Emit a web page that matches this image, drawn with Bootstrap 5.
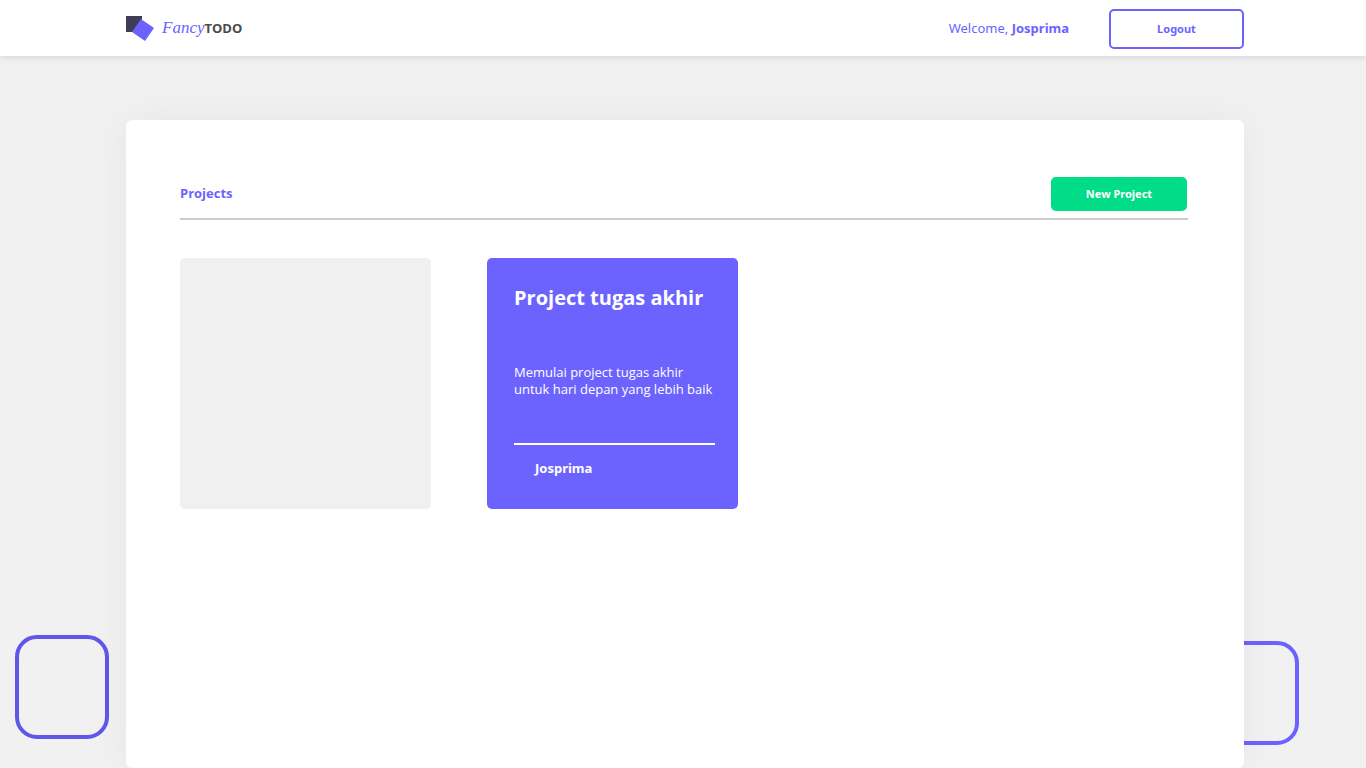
<!DOCTYPE html>
<html lang="en">
<head>
<meta charset="utf-8">
<meta name="viewport" content="width=device-width, initial-scale=1">
<title>Fancy Todo</title>
<link href="https://cdn.jsdelivr.net/npm/bootstrap@5.3.0/dist/css/bootstrap.min.css" rel="stylesheet">
<style>
:root { --brand: #6c63ff; --gray: #f0f0f0; }
body { background: #f1f1f1; font-family: "Noto Sans", "Open Sans", sans-serif; font-size: 13px; line-height: 17px; }
.page-gutter { padding-left: 126px; padding-right: 122px; }
.topbar { height: 56px; box-shadow: 0 2px 6px rgba(0,0,0,.1); z-index: 3; }
.brand-text { color: var(--brand); }
.script-name { font-family: "Liberation Serif", serif; font-style: italic; font-size: 17px; line-height: 24px; color: var(--brand); }
.caps-name { font-family: "Open Sans", sans-serif; font-size: 13px; font-weight: 700; color: #4a4a4a; }
.btn-logout { width: 135px; height: 40px; margin-top: 2px; border: 2px solid var(--brand); border-radius: 5px; color: var(--brand); font-size: 11px; font-weight: 700; padding: 0; }
.btn-logout:hover { background: var(--brand); color: #fff; }
.btn-new { width: 136px; height: 34px; margin-right: 1px; background: #00dc87; border: 0; border-radius: 5px; color: #fff; font-size: 11px; font-weight: 700; padding: 0; }
.btn-new:hover { background: #00c579; color: #fff; }
.board { min-height: calc(100vh - 120px); margin-top: 64px; padding: 57px 56px 40px 54px; border-radius: 6px; box-shadow: 0 0 40px rgba(0,0,0,.05); z-index: 1; }
.board-head { height: 43px; border-bottom: 2px solid #ccc; }
.section-title { font-family: "Open Sans", sans-serif; font-size: 13px; line-height: 32px; font-weight: 700; }
.cards { gap: 56px; margin-top: 38px; }
.tile { width: 251px; height: 251px; border-radius: 5px; }
.tile-empty { background: var(--gray); }
.tile-project { background: var(--brand); padding: 27px 23px 24px 27px; }
.tile-title { font-family: "Open Sans", sans-serif; font-size: 20px; line-height: 26px; font-weight: 700; }
.tile-text { font-family: "Open Sans", sans-serif; margin-top: 53px; }
.tile-owner { border-top: 2px solid #fff; padding: 15px 21px 8px; font-weight: 700; }
.frame { width: 94px; height: 104px; border: 4px solid var(--brand); border-radius: 22px; }
.frame-left { left: 15px; top: 635px; border-color: #5f57e8; }
.frame-right { right: 67px; top: 641px; }
</style>
</head>
<body class="position-relative">
<header class="topbar page-gutter bg-white position-relative d-flex align-items-center justify-content-between">
  <a href="#" class="d-flex align-items-center text-decoration-none">
    <svg width="36" height="28" viewBox="0 0 36 28" aria-hidden="true">
      <path d="M0 2h16v16H0z" fill="#3f3d56"/>
      <path d="M15 5l13 9-9 13-13-9z" fill="#6c63ff"/>
    </svg>
    <span class="script-name">Fancy</span><span class="caps-name">TODO</span>
  </a>
  <div class="d-flex align-items-center">
    <span class="brand-text me-4 pe-3">Welcome, <strong>Josprima</strong></span>
    <button type="button" class="btn btn-logout">Logout</button>
  </div>
</header>
<div class="frame frame-left position-absolute"></div>
<div class="frame frame-right position-absolute"></div>
<div class="page-gutter">
  <main class="board bg-white position-relative">
    <div class="board-head d-flex justify-content-between align-items-start">
      <h1 class="section-title brand-text m-0">Projects</h1>
      <button type="button" class="btn btn-new">New Project</button>
    </div>
    <div class="cards d-flex flex-wrap">
      <div class="tile tile-empty"></div>
      <article class="tile tile-project text-white d-flex flex-column">
        <h2 class="tile-title mb-0">Project tugas akhir</h2>
        <p class="tile-text mb-0">Memulai project tugas akhir<br>untuk hari depan yang lebih baik</p>
        <div class="tile-owner mt-auto">Josprima</div>
      </article>
    </div>
  </main>
</div>
<script src="https://cdn.jsdelivr.net/npm/bootstrap@5.3.0/dist/js/bootstrap.bundle.min.js"></script>
</body>
</html>
